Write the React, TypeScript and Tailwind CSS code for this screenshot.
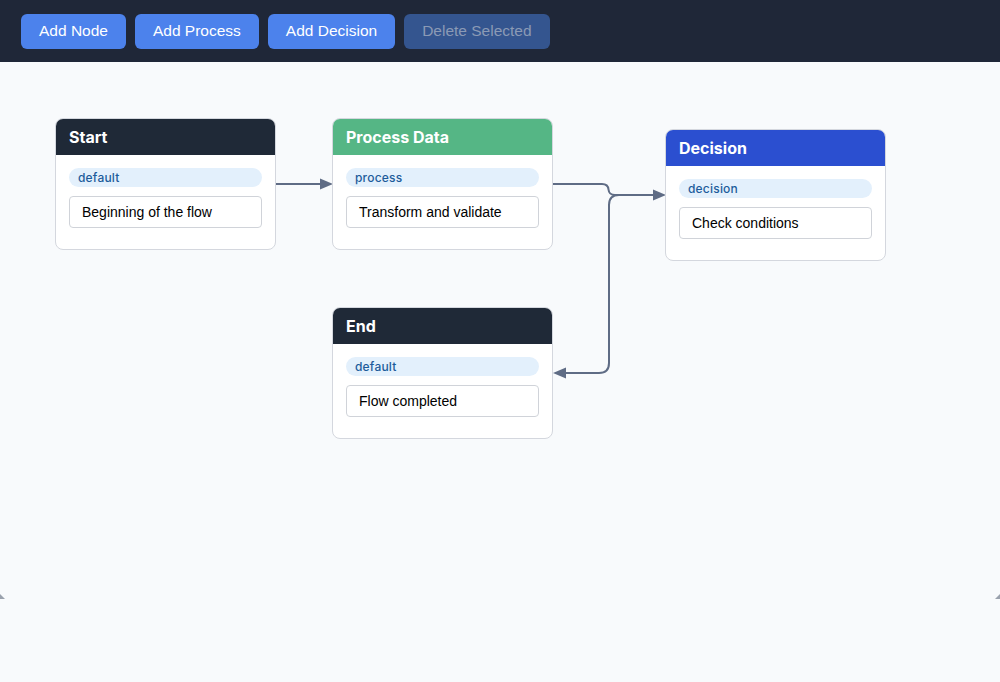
import { useState } from 'react';

type FlowNode = {
  id: string;
  title: string;
  kind: string;
  text: string;
  x: number;
  y: number;
  header: string;
};

const initialNodes: FlowNode[] = [
  { id: 'start', title: 'Start', kind: 'default', text: 'Beginning of the flow', x: 55, y: 56, header: 'bg-[#1f2937]' },
  { id: 'process', title: 'Process Data', kind: 'process', text: 'Transform and validate', x: 332, y: 56, header: 'bg-[#55b685]' },
  { id: 'decision', title: 'Decision', kind: 'decision', text: 'Check conditions', x: 665, y: 67, header: 'bg-[#2b4fd0]' },
  { id: 'end', title: 'End', kind: 'default', text: 'Flow completed', x: 332, y: 245, header: 'bg-[#1f2937]' },
];

// edge paths in canvas coordinates (canvas starts 62px below the page top)
const edges = [
  { d: 'M276 122 L321 122', arrow: 'M333 122 L320 116.5 L320 127.5 Z' },
  { d: 'M553 122 L602 122 Q608 122 608.5 127.5 Q609 133 615 133 L654 133', arrow: 'M666 133 L653 127.5 L653 138.5 Z' },
  { d: 'M619 133 Q609 133 609 143 L609 301 Q609 311 599 311 L565 311', arrow: 'M553 311 L566 305.5 L566 316.5 Z' },
];

function Toolbar({ hasSelection }: { hasSelection: boolean }) {
  const btn = 'h-[35px] px-[18px] rounded-md text-[15.5px] text-white bg-[#4c82ec] hover:bg-[#3b72e0]';
  return (
    <div className="h-[62px] bg-[#1f2738] flex items-center gap-[9px] px-[21px]">
      <button className={btn}>Add Node</button>
      <button className={btn}>Add Process</button>
      <button className={btn}>Add Decision</button>
      <button
        disabled={!hasSelection}
        className="h-[35px] px-[18px] rounded-md text-[15.5px] bg-[#34558f] text-[#8b9ab5] cursor-not-allowed"
      >
        Delete Selected
      </button>
    </div>
  );
}

function NodeCard({ node }: { node: FlowNode }) {
  return (
    <div
      className="absolute w-[221px] bg-white border border-[#d4d7de] rounded-lg overflow-hidden"
      style={{ left: node.x, top: node.y }}
    >
      <div className={`${node.header} h-[36px] flex items-center px-[13px]`}>
        <span className="text-white text-[16px] font-bold font-['Inter',sans-serif]">{node.title}</span>
      </div>
      <div className="px-[13px] pt-[13px] pb-[21px] flex flex-col gap-[9px]">
        <div className="h-[19px] rounded-full bg-[#e3f0fc] px-[9px] flex items-center text-[12px] text-[#1d5c9b] font-medium font-['Inter',sans-serif] tracking-[0.2px]">
          {node.kind}
        </div>
        <div className="h-[32px] border border-[#d0d3d9] rounded flex items-center px-[12px] text-[14px] text-black font-['Liberation_Sans',Arial,sans-serif]">
          {node.text}
        </div>
      </div>
    </div>
  );
}

export default function App() {
  const [nodes] = useState(initialNodes);
  const [selected] = useState<string | null>(null);

  return (
    <div className="w-full h-[682px] bg-[#f8fafc] font-['Liberation_Sans',Arial,sans-serif]">
      <Toolbar hasSelection={selected !== null} />
      <div className="relative h-[537px] bg-[#f8fafc]">
        <svg className="absolute inset-0 w-full h-full" viewBox="0 0 1000 537">
          {edges.map((e, i) => (
            <g key={i}>
              <path d={e.d} fill="none" stroke="#5f6c85" strokeWidth="2" />
              <path d={e.arrow} fill="#5f6c85" />
            </g>
          ))}
          {/* resize corners */}
          <path d="M0 532 L0 537 L5 537 Z" fill="#9aa1ad" />
          <path d="M1000 532 L1000 537 L995 537 Z" fill="#9aa1ad" />
        </svg>
        {nodes.map((n) => (
          <NodeCard key={n.id} node={n} />
        ))}
      </div>
    </div>
  );
}
